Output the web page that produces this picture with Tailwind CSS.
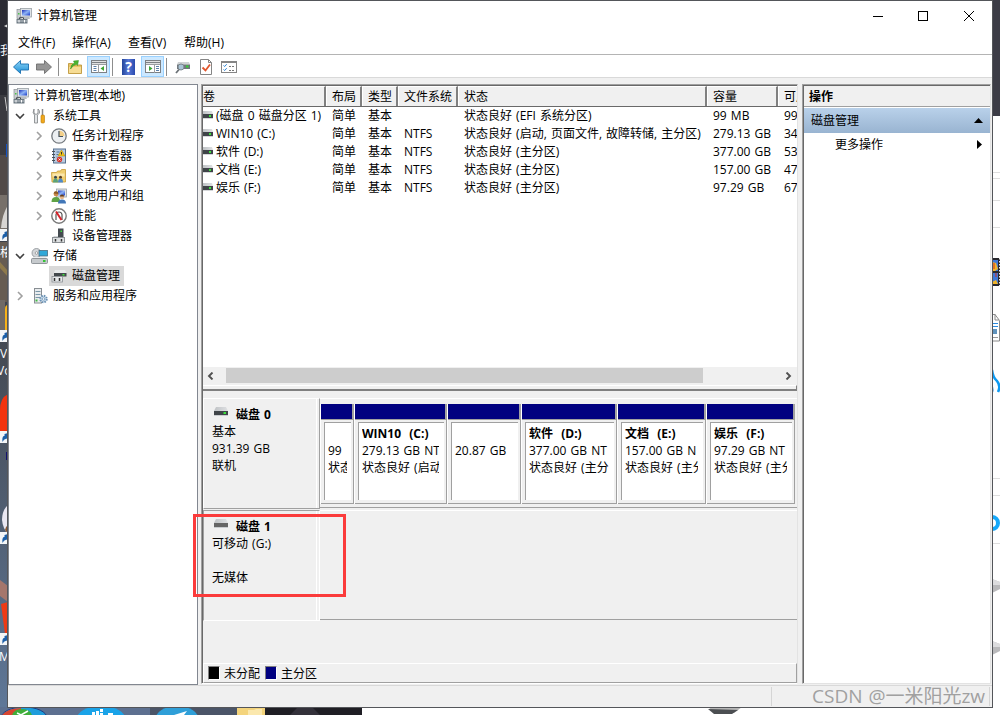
<!DOCTYPE html>
<html lang="zh-CN">
<head>
  <meta charset="UTF-8">
  <title>计算机管理</title>
  <script src="https://cdn.jsdelivr.net/npm/@tailwindcss/browser@4"></script>
</head>
<body class="relative w-[1000px] h-[715px] overflow-hidden bg-white text-black text-[12px] leading-[18px] [word-spacing:1px] font-['Open_Sans','Noto_Sans_CJK_SC',sans-serif] whitespace-nowrap">

  <!-- Shared icons -->
  <svg class="absolute w-0 h-0" xmlns="http://www.w3.org/2000/svg">
    <defs>
      <linearGradient id="gBlue" x1="0" y1="0" x2="1" y2="1">
        <stop offset="0" stop-color="#1a2fb8" />
        <stop offset=".5" stop-color="#8fb4f5" />
        <stop offset="1" stop-color="#1739c8" />
      </linearGradient>
      <linearGradient id="gArrow" x1="0" y1="0" x2="0" y2="1">
        <stop offset="0" stop-color="#8fd4f7" />
        <stop offset="1" stop-color="#1b8fd6" />
      </linearGradient>
      <linearGradient id="gDisk" x1="0" y1="0" x2="1" y2="0">
        <stop offset="0" stop-color="#bfc2c5" />
        <stop offset="1" stop-color="#dfe1e3" />
      </linearGradient>
    </defs>
    <symbol id="computer" viewBox="0 0 16 16">
      <rect x="1" y="1.500" width="4" height="9" fill="#c9cdd0" stroke="#8b9094" stroke-width=".7" />
      <rect x="2" y="5" width="1.500" height="1.500" fill="#4bc24b" />
      <rect x="4.500" y=".500" width="11" height="8.500" fill="#dfe3e6" stroke="#9aa0a5" stroke-width=".8" />
      <rect x="6" y="2" width="8" height="5.500" fill="url(#gBlue)" />
      <path d="M8 9h5l1 2H7z" fill="#b7bcc0" />
      <path d="M3.500 11V9.700h4V11" fill="none" stroke="#444b50" />
      <rect x=".500" y="11" width="11" height="4.500" fill="#6f7b84" />
      <path d="M1 13h10" stroke="#d5dbe0" stroke-width=".8" />
      <path d="M3 12v2.500M8.500 12v2.500" stroke="#fff" />
    </symbol>
    <symbol id="drive" viewBox="0 0 14 9">
      <path d="M2 0h10l2 4H0z" fill="url(#gDisk)" />
      <rect x="0" y="4" width="14" height="4" fill="#3f4448" />
      <rect x="9.500" y="5" width="2.500" height="2" fill="#3de03d" />
      <path d="M0 8.500h14" stroke="#c9cccf" />
    </symbol>
    <!-- the drive as the volume list shows it, cut at its left side -->
    <symbol id="volume" viewBox="0 0 10 8">
      <path d="M0 0h9l1 3H0z" fill="url(#gDisk)" />
      <rect y="3" width="10" height="4" fill="#3f4448" />
      <rect x="6" y="4" width="2" height="2" fill="#3de03d" />
      <path d="M0 7.500h10" stroke="#d5d7d9" />
    </symbol>
    <symbol id="right" viewBox="0 0 12 12">
      <path d="M4 2l4 4L4 10" fill="none" stroke="#a0a0a0" stroke-width="1.600" />
    </symbol>
    <symbol id="down" viewBox="0 0 12 12">
      <path d="M2 4l4 4L10 4" fill="none" stroke="#404040" stroke-width="1.600" />
    </symbol>
    <symbol id="shortcut" viewBox="0 0 8 12">
      <rect width="8" height="12" fill="#f4f6f8" />
      <path d="M2.500 11c-.500-5 .500-6 2-6V3L8 2v7L6.500 7.500Q3.500 8 2.500 11z" fill="#1c5fa8" />
    </symbol>
  </svg>

  <!-- Desktop: left strip -->
  <div class="absolute left-0 top-0 w-[8px] h-[715px] overflow-hidden bg-linear-to-b from-[#24262e] via-[#454b55] to-[#5f7899]">
    <svg width="8" height="715" viewBox="0 0 8 715">
      <rect y="0" width="8" height="95" fill="#2b2b33" />
      <rect y="95" width="8" height="60" fill="#3a3a40" />
      <rect y="155" width="8" height="40" fill="#514a48" />
      <rect y="144" x="6" width="2" height="13" fill="#1553c4" />
      <path d="M4 26l4-2v4z" fill="#ddd" />
      <path d="M5 97l2 14h1" fill="none" stroke="#ccc" />
      <rect y="195" width="8" height="35" fill="#77706a" />
      <path d="M8 205Q2 215 1 228h7z" fill="#d7d5d3" />
      <rect y="242" width="8" height="60" fill="#665c52" />
      <path d="M0 262l8 9v6l-8-9z" fill="#8e7a4c" />
      <rect y="300" width="5" height="31" fill="#6f6a66" />
      <path d="M8 305q-3 0-3 4v22h3z" fill="#f6b21a" />
      <path d="M8 394Q0 398 0 410v21h8z" fill="#f2330f" />
      <path d="M6.500 452v8" stroke="#12126e" />
      <path d="M8 505Q2 510 2 520q1 9 6 14z" fill="#e9e7f2" />
      <path d="M8 525q-3 2-3 5l3 4z" fill="#8a5a34" />
      <path d="M0 580l8 6v16l-8-6z" fill="#a5766c" />
      <path d="M1 604l7-2v32H5z" fill="#ee3a15" />
      <use href="#shortcut" y="229" width="8" height="12" />
      <use href="#shortcut" y="330" width="8" height="12" />
      <use href="#shortcut" y="431" width="8" height="12" />
      <use href="#shortcut" y="532" width="8" height="12" />
      <use href="#shortcut" y="633" width="8" height="12" />
    </svg>
    <span class="absolute left-0 top-[42px] text-white">我</span>
    <span class="absolute left-0 top-[244px] text-white">格</span>
    <span class="absolute left-0 top-[345px] text-white">V</span>
    <span class="absolute -left-[3px] top-[362px] text-white">Vo</span>
    <span class="absolute -left-[1px] top-[648px] text-white">M</span>
  </div>

  <!-- Desktop: right strip -->
  <div class="absolute left-[992px] top-0 w-[8px] h-[715px] overflow-hidden bg-white">
    <svg width="8" height="715" viewBox="0 0 8 715">
      <rect width="8" height="116" fill="#3c3c46" />
      <path d="M0 172.500h8M0 178.500h8M0 200.500h8M0 227.500h8M0 478.500h8M0 495.500h8M0 543.500h8" stroke="#dedede" />
      <rect y="258" width="8" height="28" fill="#27272c" />
      <rect y="260" width="6" height="11" fill="#3f78d8" />
      <rect y="273" width="6" height="11" fill="#3f78d8" />
      <path d="M0 262l4 1 2 6-3 2H0zM0 282l4-2 2 4H0z" fill="#f0b429" />
      <path d="M2 263v6M4 273v4" stroke="#d12f1c" />
      <path d="M7.500 258v28" stroke="#eee" stroke-dasharray="1.500 1.500" />
      <path d="M0 314.500h3l4.500 6V341H0M3 314v6h4" fill="#fff" stroke="#8a8a8a" />
      <path d="M0 323.500h6M0 326.500h6" stroke="#2b8be0" />
      <rect y="329" width="5" height="5" fill="#5f93bd" />
      <path d="M0 337.500h6" stroke="#999" />
      <path d="M0 370q1 8 5 11 4 5 1 11" fill="none" stroke="#0d9af2" stroke-width="2.500" />
      <path d="M0 384q3 6 0 11z" fill="#0d7fd8" />
      <circle cx="0" cy="523" r="6" fill="none" stroke="#16a8fa" stroke-width="4" />
      <path d="M0 579l8 3v7l-8 4z" fill="#b9b9bb" />
      <path d="M0 579l8 3v3H0z" fill="#dcdcde" />
      <path d="M0 641l8 3v7l-8 4z" fill="#b9b9bb" />
      <path d="M0 641l8 3v3H0z" fill="#dcdcde" />
    </svg>
  </div>

  <!-- Desktop: bottom strip -->
  <svg class="absolute left-0 top-[707px]" width="1000" height="8" viewBox="0 0 1000 8">
    <rect width="1000" height="8" fill="#fff" />
    <rect width="240" height="8" fill="#5d7090" />
    <rect x="150" width="90" height="8" fill="#4b5568" />
    <rect x="265" width="97" height="8" fill="#1f1e24" />
    <path d="M290 8l8-8h14l8 8z" fill="#33313a" />
    <ellipse cx="24" cy="11" rx="23" ry="11" fill="#1f9ddb" stroke="#1c3d86" />
    <path d="M2 8Q8 1 21 1v7z" fill="#d8452f" />
    <path d="M12 8q2-6 10-6t10 6z" fill="#3fae3a" />
    <path d="M17 6l4 2 7-4" fill="none" stroke="#fff" stroke-width="1.500" />
    <ellipse cx="101" cy="13" rx="25" ry="14" fill="#1aa3e8" />
    <path d="M92 5h3v3h-3zM96 4h3v4h-3zM100 2h3v3h-3zM100 6h3v2h-3zM108 6h5v2h-5z" fill="#fff" />
    <ellipse cx="177" cy="13" rx="22" ry="14" fill="#2f9fd8" />
    <path d="M174 8l13-4-3 4z" fill="#fff" />
    <rect x="237" width="28" height="8" fill="#f4d47c" />
    <path d="M248 3h6l2-1h6v6h-14z" fill="#fbe8ae" />
    <path d="M708 0h34l-8 6-18 1z" fill="#b5b5b5" />
    <path d="M708 2l30 1-6 4h-18z" fill="#4c4f52" />
  </svg>

  <!-- Window -->
  <div class="absolute left-[7px] top-0 w-[986px] h-[708px] flex flex-col border border-[#54565a] bg-[#f0f0f0]">
    <!-- Title bar -->
    <div class="h-[30px] flex items-center bg-white pl-[8px]">
      <svg width="16" height="16"><use href="#computer" /></svg>
      <span class="ml-[5px]">计算机管理</span>
      <svg class="ml-auto mr-[18px] -mt-[1px]" width="104" height="12" viewBox="0 0 104 12" fill="none" stroke="#000">
        <path d="M3 6.500h10" />
        <rect x="48.500" y="1.500" width="9" height="9" />
        <path d="M94 1l10 10M104 1L94 11" />
      </svg>
    </div>

    <!-- Menu bar -->
    <div class="h-[24px] flex items-center gap-[16px] bg-white border-b border-[#b4b4b4] pl-[10px]">
      <span class="w-[38px]">文件(F)</span>
      <span class="w-[40px]">操作(A)</span>
      <span class="w-[40px]">查看(V)</span>
      <span>帮助(H)</span>
    </div>

    <!-- Toolbar -->
    <div class="h-[23px] shrink-0 flex items-center bg-white border-b border-[#d9d9d9] pl-[5px] pt-px">
      <svg width="16" height="16" viewBox="0 0 16 16"><path d="M.500 8l7-6.500v3.500h8v6h-8v3.500z" fill="url(#gArrow)" stroke="#1a6fb0" stroke-width=".9" /></svg>
      <svg class="ml-[7px]" width="16" height="16" viewBox="0 0 16 16"><path d="M15.500 8l-7-6.500v3.500h-8v6h8v3.500z" fill="#969696" stroke="#6e6e6e" stroke-width=".9" /></svg>
      <span class="ml-[6px] w-px h-[18px] bg-[#8d8d8d]"></span>
      <svg class="ml-[8px]" width="16" height="16" viewBox="0 0 16 16">
        <path d="M1.500 4.500h4l1 1.500h8v8.500h-13z" fill="#e9c567" stroke="#b98f2e" stroke-width=".8" />
        <path d="M2 8h12v6H2z" fill="#f6dc94" />
        <path d="M3.500 10q.5-5 4-6L6.500 2l5-.500-1 5L9.300 5.300Q6 6 3.500 10z" fill="#4cb52f" stroke="#2f8a1d" stroke-width=".5" />
      </svg>
      <span class="ml-[4px] w-[23px] h-[21px] flex items-center justify-center bg-[#cce8ff] border border-[#99d1ff]">
        <svg width="16" height="15" viewBox="0 0 16 15">
          <rect x=".500" y="1.500" width="15" height="12" fill="#fff" stroke="#7c8084" />
          <path d="M1 3.500h14" stroke="#7c8084" stroke-width="1.500" />
          <path d="M1 5.500h14M7.500 6v8" stroke="#9a9ea2" />
          <path d="M2.500 7.500h3M2.500 9.500h3M2.500 11.500h3" stroke="#5b7fa8" />
          <path d="M13 7v5l-3.500-2.500z" fill="#3da535" />
        </svg>
      </span>
      <span class="ml-[2px] w-px h-[18px] bg-[#8d8d8d]"></span>
      <span class="ml-[9px] w-[13px] h-[16px] bg-linear-to-r from-[#23459a] via-[#5878d6] to-[#2a49ad] text-white font-bold text-[14px] leading-[16px] text-center">?</span>
      <span class="ml-[6px] w-[23px] h-[21px] flex items-center justify-center bg-[#cce8ff] border border-[#99d1ff]">
        <svg width="16" height="15" viewBox="0 0 16 15">
          <rect x=".500" y="1.500" width="15" height="12" fill="#fff" stroke="#7c8084" />
          <path d="M1 3.500h14" stroke="#7c8084" stroke-width="1.500" />
          <path d="M1 5.500h14M9.500 6v8" stroke="#9a9ea2" />
          <path d="M11 7.500h3M11 9.500h3M11 11.500h3" stroke="#5b7fa8" />
          <path d="M4 7v5l3.500-2.500z" fill="#3da535" />
        </svg>
      </span>
      <span class="ml-[2px] w-px h-[18px] bg-[#8d8d8d]"></span>
      <svg class="ml-[8px]" width="16" height="16" viewBox="0 0 16 16">
        <path d="M3 3h11l1 2.500H2z" fill="#cfd2d4" />
        <rect x="2" y="5.500" width="13" height="4.500" fill="#70767b" />
        <rect x="11" y="6.500" width="2.500" height="2" fill="#35d035" />
        <circle cx="6" cy="8" r="3" fill="#a9c4d6" stroke="#7b868e" />
        <path d="M4 10.500l-3 3.500" stroke="#6b7176" stroke-width="1.800" />
      </svg>
      <svg class="ml-[8px]" width="14" height="16" viewBox="0 0 14 16">
        <path d="M1.500.500h8l3 3v12h-11z" fill="#fff" stroke="#858585" />
        <path d="M9.500.500v3h3" fill="none" stroke="#858585" />
        <path d="M3.500 8.500l3 3 4.500-6" fill="none" stroke="#e2552b" stroke-width="1.800" />
      </svg>
      <svg class="ml-[8px]" width="16" height="14" viewBox="0 0 16 14">
        <rect x=".500" y="1.500" width="15" height="11" fill="#fff" stroke="#858585" />
        <path d="M1 2.500h14" stroke="#858585" />
        <path d="M2.500 5.500l1.200 1 2-2.300M2.500 9.500l1.200 1 2-2.300" fill="none" stroke="#2f86d6" />
        <path d="M8 6.500h2M11 6.500h2M8 10.500h2M11 10.500h2" stroke="#777" />
      </svg>
    </div>

    <!-- Panes -->
    <div class="h-[607px] shrink-0 flex pt-[6px]">
      <!-- Console tree -->
      <div class="w-[190px] h-[601px] shrink-0 bg-white border border-[#828790] pt-px flex flex-col leading-[20px]">
        <div class="h-[20px] flex items-center pl-[4px]">
          <svg width="16" height="16"><use href="#computer" /></svg>
          <span class="ml-[5px]">计算机管理(本地)</span>
        </div>
        <div class="h-[20px] flex items-center pl-[5px]">
          <svg width="12" height="12"><use href="#down" /></svg>
          <svg class="ml-[5px]" width="16" height="16" viewBox="0 0 16 16">
            <path d="M3 1v4l2 1.500L7 5V1q2 1.500 1.500 4L6.500 7v8h-3V7Q1 5 3 1z" fill="#e3e5e7" stroke="#7d8184" stroke-width=".8" />
            <path d="M11.500 1v7" stroke="#888" stroke-width="1.500" />
            <rect x="10" y="7" width="3.500" height="8" rx="1" fill="#f0a81c" stroke="#b87a0a" stroke-width=".6" />
          </svg>
          <span class="ml-[6px]">系统工具</span>
        </div>
        <div class="h-[20px] flex items-center pl-[24px]">
          <svg width="12" height="12"><use href="#right" /></svg>
          <svg class="ml-[6px]" width="16" height="16" viewBox="0 0 16 16">
            <circle cx="8" cy="8" r="7.200" fill="#eceff2" stroke="#74797e" stroke-width="1.300" />
            <path d="M8 8V2.500A5.500 5.500 0 0 1 13.500 8z" fill="#f3d08a" />
            <path d="M8 3v5.500h4" fill="none" stroke="#45525e" stroke-width="1.200" />
          </svg>
          <span class="ml-[5px]">任务计划程序</span>
        </div>
        <div class="h-[20px] flex items-center pl-[24px]">
          <svg width="12" height="12"><use href="#right" /></svg>
          <svg class="ml-[6px]" width="16" height="16" viewBox="0 0 16 16">
            <rect x="2.500" y="1" width="12" height="14" fill="#b9cbe0" stroke="#57718f" />
            <path d="M1 3.500h3M1 6.500h3M1 9.500h3M1 12.500h3" stroke="#4a4f55" />
            <path d="M5.500 4h3M5.500 6.500h2M5.500 9h1" stroke="#47719d" />
            <path d="M10.500 2l3.500 6H7z" fill="#f5c518" stroke="#a88408" stroke-width=".5" />
            <path d="M10.500 4v2.500" stroke="#333" />
            <circle cx="8.500" cy="11.500" r="2.700" fill="#d8362b" />
            <path d="M7.500 10.500l2 2M9.500 10.500l-2 2" stroke="#fff" stroke-width=".8" />
          </svg>
          <span class="ml-[5px]">事件查看器</span>
        </div>
        <div class="h-[20px] flex items-center pl-[24px]">
          <svg width="12" height="12"><use href="#right" /></svg>
          <svg class="ml-[6px]" width="16" height="16" viewBox="0 0 16 16">
            <path d="M.500 4.500h5l1-1.500h3l1-1.500h4V14H1z" fill="#f0ce70" stroke="#c79a35" stroke-width=".8" />
            <path d="M1.500 5.500h12v3h-12z" fill="#fae6ac" />
            <circle cx="4.500" cy="9.200" r="1.500" fill="#37474f" />
            <path d="M2 14.500q0-4 2.500-4t2.500 4z" fill="#5aa37a" />
            <circle cx="9.500" cy="9.200" r="1.500" fill="#5a3c20" />
            <path d="M7 14.500q0-4 2.500-4t2.500 4z" fill="#4d89c8" />
          </svg>
          <span class="ml-[5px]">共享文件夹</span>
        </div>
        <div class="h-[20px] flex items-center pl-[24px]">
          <svg width="12" height="12"><use href="#right" /></svg>
          <svg class="ml-[6px]" width="16" height="16" viewBox="0 0 16 16">
            <rect x="5.500" y="1" width="10" height="8" fill="#dfe3e6" stroke="#9aa0a5" stroke-width=".8" />
            <rect x="7" y="2.500" width="7" height="5" fill="url(#gBlue)" />
            <circle cx="5" cy="6" r="2.400" fill="#c98a4b" />
            <path d="M2.600 5.500Q3 3 5.200 3.200T7.400 6z" fill="#8a5a28" />
            <path d="M.500 14q0-5 4.500-5t4 5z" fill="#5fa346" />
            <circle cx="11" cy="9" r="2.200" fill="#e3b58a" />
            <path d="M8.800 8.500q.200-2 2.200-2t2.200 2z" fill="#5b3c22" />
            <path d="M7 15.500q0-4 4-4t4 4z" fill="#4277b8" />
          </svg>
          <span class="ml-[5px]">本地用户和组</span>
        </div>
        <div class="h-[20px] flex items-center pl-[24px]">
          <svg width="12" height="12"><use href="#right" /></svg>
          <svg class="ml-[6px]" width="16" height="16" viewBox="0 0 16 16">
            <circle cx="8" cy="8" r="7.200" fill="#fff" stroke="#7a7a7a" stroke-width="1.400" />
            <path d="M5 12V6.500Q5.500 4 8 4t3 2.500V12" fill="none" stroke="#555" stroke-width="1.200" />
            <path d="M5 3.500l5.500 8.500" stroke="#d8242c" stroke-width="2" />
          </svg>
          <span class="ml-[5px]">性能</span>
        </div>
        <div class="h-[20px] flex items-center pl-[42px]">
          <svg width="16" height="16" viewBox="0 0 16 16">
            <rect x="7" y=".500" width="5.500" height="9" fill="#454b50" />
            <rect x="9.500" y="2.500" width="1.500" height="1.500" fill="#3de03d" />
            <path d="M2.500 8H7v2H2.500z" fill="#cfd2d5" />
            <rect x="1.500" y="9.500" width="12" height="5" fill="#dcdfe1" stroke="#8b9094" />
            <path d="M4.500 11v2.500M10.500 11v2.500" stroke="#333" stroke-width="1.500" />
          </svg>
          <span class="ml-[5px]">设备管理器</span>
        </div>
        <div class="h-[20px] flex items-center pl-[5px]">
          <svg width="12" height="12"><use href="#down" /></svg>
          <svg class="ml-[5px]" width="17" height="16" viewBox="0 0 17 16">
            <circle cx="5.500" cy="5" r="4.500" fill="#d3d6d9" stroke="#8a8f94" stroke-width=".8" />
            <circle cx="5.500" cy="5" r="1.300" fill="#fff" stroke="#777" stroke-width=".6" />
            <rect x="8" y="2.500" width="8.500" height="5.500" fill="#31a8d8" stroke="#4d6d80" stroke-width=".8" />
            <path d="M2 9h13l1.500 2H.500z" fill="#eceeef" />
            <rect x=".500" y="10.500" width="16" height="5" rx="1" fill="#c6cacd" stroke="#7d8388" stroke-width=".8" />
            <rect x="12" y="12" width="2.500" height="2" fill="#35c435" />
          </svg>
          <span class="ml-[5px]">存储</span>
        </div>
        <div class="h-[20px] flex items-center pl-[40px]">
          <span class="h-[20px] w-[75px] flex items-center bg-[#d9d9d9] pl-[2px]">
            <svg width="16" height="16" viewBox="0 0 16 16">
              <path d="M4 2h10l1.500 3H3z" fill="#e8eaeb" />
              <rect x="3" y="5" width="12.500" height="3.500" fill="#44494d" />
              <rect x="11.500" y="6" width="2" height="1.500" fill="#3de03d" />
              <rect x="1" y="8.500" width="10.500" height="5.500" fill="#e6e8ea" stroke="#8b9094" stroke-width=".8" />
              <path d="M3.500 10v3M8.500 10v3" stroke="#333" stroke-width="1.500" />
            </svg>
            <span class="ml-[5px]">磁盘管理</span>
          </span>
        </div>
        <div class="h-[20px] flex items-center pl-[5px]">
          <svg width="12" height="12"><use href="#right" /></svg>
          <svg class="ml-[7px]" width="15" height="16" viewBox="0 0 15 16">
            <rect x="1.500" y=".500" width="7" height="14.500" fill="#e9ecee" stroke="#888e93" />
            <path d="M2.500 3.500h5M2.500 6.500h5M2.500 9.500h5" stroke="#7a97a8" />
            <rect x="2.500" y="11.500" width="2" height="2" fill="#42b842" />
            <circle cx="10.500" cy="11" r="3.200" fill="#cfe0ee" stroke="#6c92b5" stroke-width="2" stroke-dasharray="1.500 1" />
            <circle cx="10.500" cy="11" r="1.200" fill="#fff" stroke="#6c92b5" stroke-width=".7" />
          </svg>
          <span class="ml-[5px]">服务和应用程序</span>
        </div>
      </div>

      <!-- Volumes and disks -->
      <div class="ml-[3px] w-[597px] h-[600px] shrink-0 flex flex-col border border-[#a0a0a0] border-r-[#e3e3e3] border-b-white">
        <div class="w-[595px] h-[598px] flex flex-col border-l border-t border-[#696969] overflow-hidden">
          <!-- Volume list -->
          <div class="h-[281px] shrink-0 bg-white flex flex-col overflow-hidden">
            <div class="h-[21px] shrink-0 flex leading-[20px] bg-[#f0f0f0] border-b border-[#696969] *:shrink-0 *:border-t *:border-t-white *:border-r-2 *:border-r-[#808080]">
              <span class="w-[123px]">卷</span>
              <span class="w-[36px] border-l border-l-white pl-[5px]">布局</span>
              <span class="w-[36px] border-l border-l-white pl-[5px]">类型</span>
              <span class="w-[60px] border-l border-l-white pl-[5px]">文件系统</span>
              <span class="w-[249px] border-l border-l-white pl-[5px]">状态</span>
              <span class="w-[71px] border-l border-l-white pl-[5px]">容量</span>
              <span class="w-[60px] border-l border-l-white pl-[5px]">可用空间</span>
            </div>
            <div class="grid grid-cols-[13px_116px_36px_36px_60px_249px_71px_60px] auto-rows-[18px] items-center">
              <svg class="-mt-[2px]" width="10" height="8"><use href="#volume" /></svg>
              <span>(磁盘 0 磁盘分区 1)</span><span>简单</span><span>基本</span><span></span><span>状态良好 (EFI 系统分区)</span><span>99 MB</span><span>99</span>
              <svg class="-mt-[2px]" width="10" height="8"><use href="#volume" /></svg>
              <span>WIN10 (C:)</span><span>简单</span><span>基本</span><span>NTFS</span><span>状态良好 (启动, 页面文件, 故障转储, 主分区)</span><span>279.13 GB</span><span>34</span>
              <svg class="-mt-[2px]" width="10" height="8"><use href="#volume" /></svg>
              <span>软件 (D:)</span><span>简单</span><span>基本</span><span>NTFS</span><span>状态良好 (主分区)</span><span>377.00 GB</span><span>53</span>
              <svg class="-mt-[2px]" width="10" height="8"><use href="#volume" /></svg>
              <span>文档 (E:)</span><span>简单</span><span>基本</span><span>NTFS</span><span>状态良好 (主分区)</span><span>157.00 GB</span><span>47</span>
              <svg class="-mt-[2px]" width="10" height="8"><use href="#volume" /></svg>
              <span>娱乐 (F:)</span><span>简单</span><span>基本</span><span>NTFS</span><span>状态良好 (主分区)</span><span>97.29 GB</span><span>67</span>
            </div>
          </div>
          <!-- Horizontal scrollbar -->
          <div class="h-[17px] shrink-0 flex items-center bg-[#f0f0f0] mb-px">
            <svg class="ml-[4px]" width="7" height="8" viewBox="0 0 7 8"><path d="M5.500.500L2 4l3.500 3.500" fill="none" stroke="#505050" stroke-width="1.900" /></svg>
            <span class="ml-[12px] w-[477px] h-[15px] bg-[#cdcdcd]"></span>
            <svg class="ml-auto mr-[5px]" width="7" height="8" viewBox="0 0 7 8"><path d="M1.500.500L5 4 1.500 7.500" fill="none" stroke="#505050" stroke-width="1.900" /></svg>
          </div>
          <!-- Splitter -->
          <div class="h-[6px] shrink-0 border-t border-t-white border-b-2 border-b-[#808080] border-r border-r-[#808080]"></div>

          <!-- Disk 0 -->
          <div class="mt-[7px] h-[112px] shrink-0 flex">
            <div class="w-[117px] h-[111px] border-t border-l border-white border-r border-r-[#a0a0a0] border-b border-b-[#a0a0a0] flex">
              <div class="w-[113px] border-r border-white pl-[8px] leading-[17px] pt-[7px]">
                <div class="flex items-start font-bold">
                  <svg class="ml-[2px] mt-[1px]" width="14" height="9"><use href="#drive" /></svg>
                  <span class="ml-[8px]">磁盘 0</span>
                </div>
                <p>基本</p>
                <p>931.39 GB</p>
                <p>联机</p>
              </div>
            </div>
            <div class="grow h-[110px] border-t border-white border-b border-b-[#a0a0a0] pt-[5px] flex leading-[17px]">
              <!-- EFI -->
              <div class="w-[34px] h-[100px] flex flex-col border-l border-l-white border-r border-r-[#a0a0a0]">
                <span class="h-[16px] shrink-0 bg-[#000080] border-b border-r border-[#a0a0a0]"></span>
                <div class="grow border-b border-[#a0a0a0] pt-[2px] pb-[3px] pl-[3px] pr-[2px] flex">
                  <div class="grow w-0 bg-white border-l border-t border-[#a0a0a0] pl-[3px] pr-[4px] pt-[19px]">
                    <div class="overflow-hidden"><p>99</p><p>状态良好</p></div>
                  </div>
                </div>
              </div>
              <!-- C -->
              <div class="w-[93px] h-[100px] flex flex-col border-l border-l-white border-r border-r-[#a0a0a0]">
                <span class="h-[16px] shrink-0 bg-[#000080] border-b border-r border-[#a0a0a0]"></span>
                <div class="grow border-b border-[#a0a0a0] pt-[2px] pb-[3px] pl-[3px] pr-[2px] flex">
                  <div class="grow w-0 bg-white border-l border-t border-[#a0a0a0] pl-[3px] pr-[5px] pt-[2px]">
                    <div class="overflow-hidden"><p class="font-bold whitespace-pre">WIN10  (C:)</p><p>279.13 GB NT</p><p>状态良好 (启动</p></div>
                  </div>
                </div>
              </div>
              <!-- Recovery -->
              <div class="w-[74px] h-[100px] flex flex-col border-l border-l-white border-r border-r-[#a0a0a0]">
                <span class="h-[16px] shrink-0 bg-[#000080] border-b border-r border-[#a0a0a0]"></span>
                <div class="grow border-b border-[#a0a0a0] pt-[2px] pb-[3px] pl-[3px] pr-[2px] flex">
                  <div class="grow w-0 bg-white border-l border-t border-[#a0a0a0] pl-[3px] pr-[4px] pt-[19px]">
                    <div class="overflow-hidden"><p>20.87 GB</p></div>
                  </div>
                </div>
              </div>
              <!-- D -->
              <div class="w-[96px] h-[100px] flex flex-col border-l border-l-white border-r border-r-[#a0a0a0]">
                <span class="h-[16px] shrink-0 bg-[#000080] border-b border-r border-[#a0a0a0]"></span>
                <div class="grow border-b border-[#a0a0a0] pt-[2px] pb-[3px] pl-[3px] pr-[2px] flex">
                  <div class="grow w-0 bg-white border-l border-t border-[#a0a0a0] pl-[3px] pr-[4px] pt-[2px]">
                    <div class="overflow-hidden"><p class="font-bold whitespace-pre">软件  (D:)</p><p>377.00 GB NT</p><p>状态良好 (主分</p></div>
                  </div>
                </div>
              </div>
              <!-- E -->
              <div class="w-[89px] h-[100px] flex flex-col border-l border-l-white border-r border-r-[#a0a0a0]">
                <span class="h-[16px] shrink-0 bg-[#000080] border-b border-r border-[#a0a0a0]"></span>
                <div class="grow border-b border-[#a0a0a0] pt-[2px] pb-[3px] pl-[3px] pr-[2px] flex">
                  <div class="grow w-0 bg-white border-l border-t border-[#a0a0a0] pl-[3px] pr-[5px] pt-[2px]">
                    <div class="overflow-hidden"><p class="font-bold whitespace-pre">文档  (E:)</p><p>157.00 GB N</p><p>状态良好 (主分</p></div>
                  </div>
                </div>
              </div>
              <!-- F -->
              <div class="w-[89px] h-[100px] flex flex-col border-l border-l-white border-r border-r-[#a0a0a0]">
                <span class="h-[16px] shrink-0 bg-[#000080] border-b border-r border-[#a0a0a0]"></span>
                <div class="grow border-b border-[#a0a0a0] pt-[2px] pb-[3px] pl-[3px] pr-[2px] flex">
                  <div class="grow w-0 bg-white border-l border-t border-[#a0a0a0] pl-[3px] pr-[5px] pt-[2px]">
                    <div class="overflow-hidden"><p class="font-bold whitespace-pre">娱乐  (F:)</p><p>97.29 GB NT</p><p>状态良好 (主分</p></div>
                  </div>
                </div>
              </div>
            </div>
          </div>

          <!-- Disk 1 -->
          <div class="h-[111px] shrink-0 flex">
            <div class="w-[117px] border-t border-l border-[#a0a0a0] border-r border-r-white border-b border-b-white flex">
              <div class="w-[113px] border-r border-white pl-[8px] leading-[17px] pt-[7px]">
                <div class="flex items-start font-bold">
                  <svg class="ml-[2px] mt-[1px]" width="14" height="9" viewBox="0 0 14 9">
                    <path d="M2 0h10l2 4H0z" fill="url(#gDisk)" />
                    <rect y="4" width="14" height="4" fill="#666" />
                    <path d="M0 8.500h14" stroke="#c9cccf" />
                  </svg>
                  <span class="ml-[8px]">磁盘 1</span>
                </div>
                <p>可移动 (G:)</p>
                <p class="mt-[17px]">无媒体</p>
              </div>
            </div>
            <div class="grow h-[110px] border-t border-white border-b border-b-[#a0a0a0]"></div>
          </div>

          <!-- Legend -->
          <div class="mt-auto h-[20px] w-[594px] shrink-0 flex items-center border-t border-l border-white border-r border-r-[#a0a0a0] border-b border-b-[#a0a0a0] pl-[4px]">
            <span class="w-[12px] h-[14px] bg-black border border-[#808080] border-r-white border-b-white"></span>
            <span class="ml-[4px] pt-px">未分配</span>
            <span class="ml-[5px] w-[12px] h-[14px] bg-[#000080] border border-[#808080] border-r-white border-b-white"></span>
            <span class="ml-[4px] pt-px">主分区</span>
          </div>
        </div>
      </div>

      <!-- Actions pane -->
      <div class="ml-[4px] w-[189px] h-[600px] border border-[#a0a0a0] border-r-[#e3e3e3] border-b-[#e3e3e3]">
        <div class="h-full border-l border-t border-[#696969] bg-white flex flex-col">
          <div class="h-[21px] bg-[#f0f0f0] border-b border-[#a0a0a0] pl-[5px] leading-[21px] font-bold">操作</div>
          <div class="mt-px h-[25px] flex items-center bg-linear-to-b from-[#b9d1ea] to-[#99b4d1] pl-[7px]">
            <span>磁盘管理</span>
            <svg class="ml-auto mr-[7px]" width="9" height="5" viewBox="0 0 9 5"><path d="M4.500 0L9 5H0z" /></svg>
          </div>
          <div class="h-[24px] flex items-center pl-[31px]">
            <span>更多操作</span>
            <svg class="ml-auto mr-[8px] -mt-[1px]" width="5" height="9" viewBox="0 0 5 9"><path d="M0 0l5 4.500L0 9z" /></svg>
          </div>
        </div>
      </div>
    </div>

    <!-- Status bar -->
    <div class="grow border-t border-[#d9d9d9] flex items-center">
      <span class="ml-[763px] w-px h-[19px] bg-[#d5d5d5]"></span>
      <span class="ml-[217px] w-px h-[19px] bg-[#d5d5d5]"></span>
    </div>
  </div>

  <!-- Highlight around the removable disk -->
  <div class="absolute left-[193px] top-[514px] w-[153px] h-[83px] border-3 border-[#fb3b3b]"></div>

  <!-- Watermark -->
  <div class="absolute left-[812px] top-[683px] text-[19px] leading-[26px] text-[#a0a0a0]">CSDN @一米阳光zw</div>
</body>
</html>
